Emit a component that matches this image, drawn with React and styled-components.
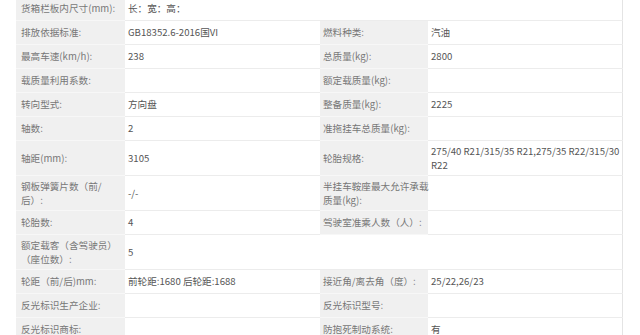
import React from 'react';
import styled, { createGlobalStyle } from 'styled-components';

const GlobalStyle = createGlobalStyle`
  html, body {
    margin: 0;
    padding: 0;
    background: #fff;
  }
  body {
    font-family: "Microsoft YaHei", "Noto Sans CJK SC", "Noto Sans", sans-serif;
    overflow: hidden;
  }
`

const Page = styled.div`
  width: 640px;
  height: 335px;
  overflow: hidden;
  padding-left: 16px;
  box-sizing: border-box;
`
const Table = styled.table`
  width: 606px;
  margin-top: -4px;
  border-collapse: collapse;
  table-layout: fixed;
  border-right: 1px solid #e4e4e4;
  font-size: 9.6px;
  line-height: 14px;
`
const Row = styled.tr`
  height: 24px;
`
const LabelCell = styled.td`
  padding: 3px 0 3px ${p => p.$left || 3}px;
  background: #f0f0f0;
  color: #777;
  border-bottom: 1px solid #f7f7f7;
  vertical-align: middle;
  white-space: pre;
`
const ValueCell = styled.td`
  padding: 3px 1px 3px 3px;
  background: #fff;
  color: #555;
  border-bottom: 1px solid #ececec;
  vertical-align: middle;
`
const Blank = styled.td`
  background: #fff;
  border-bottom: 1px solid #ececec;
`

const rows = [
  ['货箱栏板内尺寸(mm):', '长：宽：高：'],
  ['排放依据标准:', 'GB18352.6-2016国VI', '燃料种类:', '汽油'],
  ['最高车速(km/h):', '238', '总质量(kg):', '2800'],
  ['载质量利用系数:', '', '额定载质量(kg):', ''],
  ['转向型式:', '方向盘', '整备质量(kg):', '2225'],
  ['轴数:', '2', '准拖挂车总质量(kg):', ''],
  ['轴距(mm):', '3105', '轮胎规格:', '275/40 R21/315/35 R21,275/35 R22/315/30 R22'],
  ['钢板弹簧片数（前/\n后）:', '-/-', '半挂车鞍座最大允许承载\n质量(kg):', ''],
  ['轮胎数:', '4', '驾驶室准乘人数（人）:', ''],
  ['额定载客（含驾驶员）\n（座位数）:', '5'],
  ['轮距（前/后)mm:', '前轮距:1680 后轮距:1688', '接近角/离去角（度）:', '25/22,26/23'],
  ['反光标识生产企业:', '', '反光标识型号:', ''],
  ['反光标识商标:', '', '防抱死制动系统:', '有'],
];

const App = () => (
  <Page>
    <GlobalStyle />
    <Table>
      <colgroup>
        <col style={{ width: 109 }} />
        <col style={{ width: 195 }} />
        <col style={{ width: 108 }} />
        <col style={{ width: 194 }} />
      </colgroup>
      <tbody>
        {rows.map((r, i) => (
          <Row key={i}>
            <LabelCell $left={5}>{r[0]}</LabelCell>
            <ValueCell>{r[1]}</ValueCell>
            {r.length > 2 ? (
              <>
                <LabelCell>{r[2]}</LabelCell>
                <ValueCell>{r[3]}</ValueCell>
              </>
            ) : (
              <Blank colSpan={2} />
            )}
          </Row>
        ))}
      </tbody>
    </Table>
  </Page>
);

export default App;
